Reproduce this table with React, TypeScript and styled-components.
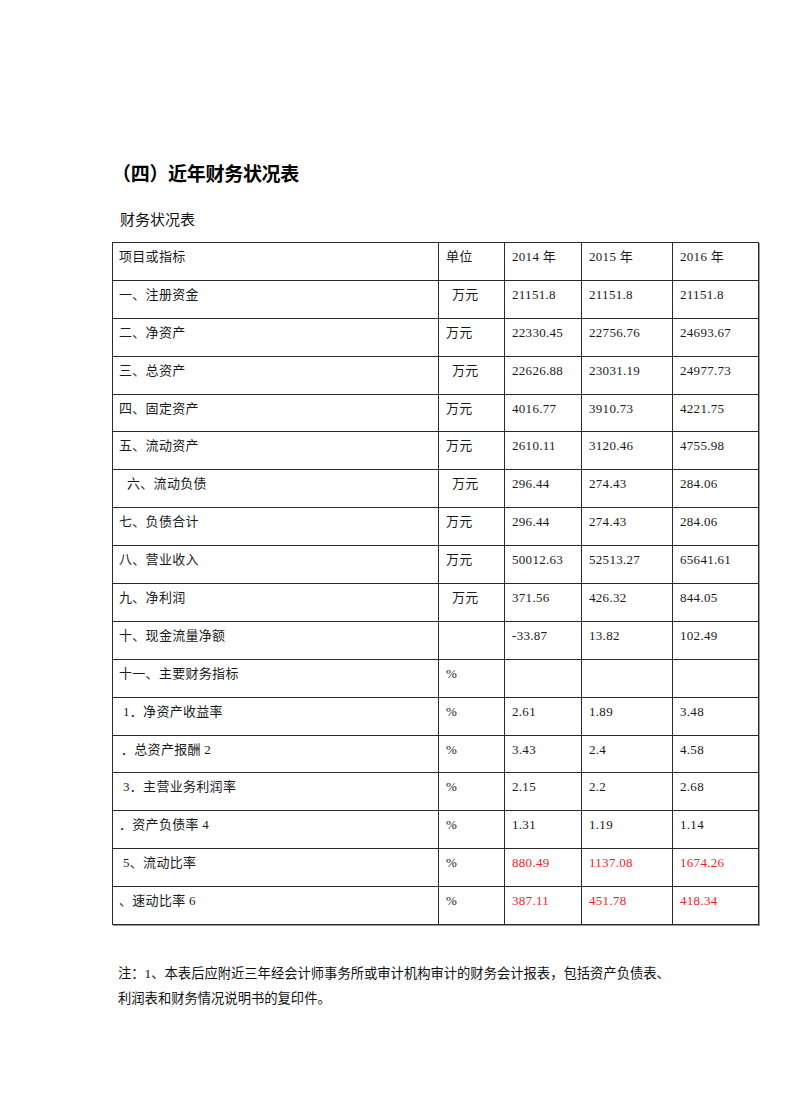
import styled, { createGlobalStyle } from "styled-components";

const GlobalStyle = createGlobalStyle`
    html, body {
        margin: 0;
        padding: 0;
        background: #ffffff;
    }
    body {
        font-family: "Liberation Serif", "Noto Sans CJK SC", serif;
        color: #111;
    }
`;

const Page = styled.div`
    width: 792px;
    height: 1120px;
    box-sizing: border-box;
    padding: 161px 0 0 112px;
    background: #fff;
`;

const Heading = styled.h2`
    margin: 0;
    font-family: "Noto Sans CJK SC", sans-serif;
    font-weight: 700;
    font-size: 19px;
    line-height: 24px;
    letter-spacing: -0.3px;
    color: #000;
`;

const SubHeading = styled.div`
    margin: 24px 0 0 8px;
    font-family: "Noto Sans CJK SC", sans-serif;
    font-size: 15px;
    line-height: 20px;
    color: #111;
`;

const Table = styled.table`
    margin-top: 13px;
    width: 646px;
    border-collapse: collapse;
    table-layout: fixed;
    border: 1px solid #222;
    box-shadow: 1px 1px 0 #9a9a9a;
`;

const Row = styled.tr`
    height: 37.9px;
`;

const Cell = styled.td<{ $indent?: number; $red?: boolean }>`
    border: 1px solid #2a2a2a;
    vertical-align: top;
    padding: 5px 4px 0 ${(p) => 6 + (p.$indent ?? 0)}px;
    font-size: 13px;
    line-height: 18px;
    letter-spacing: 0.3px;
    color: ${(p) => (p.$red ? "#f31d1d" : "#1a1a1a")};
    white-space: nowrap;
    overflow: hidden;
`;

const Note = styled.div`
    margin: 36px 0 0 6px;
    font-size: 13.3px;
    line-height: 25px;
    color: #111;
`;

type Item = {
    name: string;
    indent?: number;
    unit: string;
    unitIndent?: number;
    v: [string, string, string];
    red?: boolean;
};

const items: Item[] = [
    { name: "一、注册资金", unit: "万元", unitIndent: 7, v: ["21151.8", "21151.8", "21151.8"] },
    { name: "二、净资产", unit: "万元", v: ["22330.45", "22756.76", "24693.67"] },
    { name: "三、总资产", unit: "万元", unitIndent: 7, v: ["22626.88", "23031.19", "24977.73"] },
    { name: "四、固定资产", unit: "万元", v: ["4016.77", "3910.73", "4221.75"] },
    { name: "五、流动资产", unit: "万元", v: ["2610.11", "3120.46", "4755.98"] },
    { name: "六、流动负债", indent: 8, unit: "万元", unitIndent: 7, v: ["296.44", "274.43", "284.06"] },
    { name: "七、负债合计", unit: "万元", v: ["296.44", "274.43", "284.06"] },
    { name: "八、营业收入", unit: "万元", v: ["50012.63", "52513.27", "65641.61"] },
    { name: "九、净利润", unit: "万元", unitIndent: 7, v: ["371.56", "426.32", "844.05"] },
    { name: "十、现金流量净额", unit: "", v: ["-33.87", "13.82", "102.49"] },
    { name: "十一、主要财务指标", unit: "%", v: ["", "", ""] },
    { name: "1．净资产收益率", indent: 4, unit: "%", v: ["2.61", "1.89", "3.48"] },
    { name: "．总资产报酬 2", indent: 2, unit: "%", v: ["3.43", "2.4", "4.58"] },
    { name: "3．主营业务利润率", indent: 4, unit: "%", v: ["2.15", "2.2", "2.68"] },
    { name: "．资产负债率 4", unit: "%", v: ["1.31", "1.19", "1.14"] },
    { name: "5、流动比率", indent: 4, unit: "%", v: ["880.49", "1137.08", "1674.26"], red: true },
    { name: "、速动比率 6", unit: "%", v: ["387.11", "451.78", "418.34"], red: true },
];

export default function App() {
    return (
        <Page>
            <GlobalStyle />
            <Heading>（四）近年财务状况表</Heading>
            <SubHeading>财务状况表</SubHeading>
            <Table>
                <colgroup>
                    <col style={{ width: 326 }} />
                    <col style={{ width: 66 }} />
                    <col style={{ width: 77 }} />
                    <col style={{ width: 91 }} />
                    <col style={{ width: 86 }} />
                </colgroup>
                <tbody>
                    <Row>
                        <Cell>项目或指标</Cell>
                        <Cell $indent={1}>单位</Cell>
                        <Cell $indent={1}>2014 年</Cell>
                        <Cell $indent={1}>2015 年</Cell>
                        <Cell $indent={1}>2016 年</Cell>
                    </Row>
                    {items.map((it) => (
                        <Row key={it.name}>
                            <Cell $indent={it.indent}>{it.name}</Cell>
                            <Cell $indent={it.unitIndent ?? 1}>{it.unit}</Cell>
                            {it.v.map((val, i) => (
                                <Cell key={i} $indent={1} $red={it.red}>
                                    {val}
                                </Cell>
                            ))}
                        </Row>
                    ))}
                </tbody>
            </Table>
            <Note>
                注：1、本表后应附近三年经会计师事务所或审计机构审计的财务会计报表，包括资产负债表、
                <br />
                利润表和财务情况说明书的复印件。
            </Note>
        </Page>
    );
}
